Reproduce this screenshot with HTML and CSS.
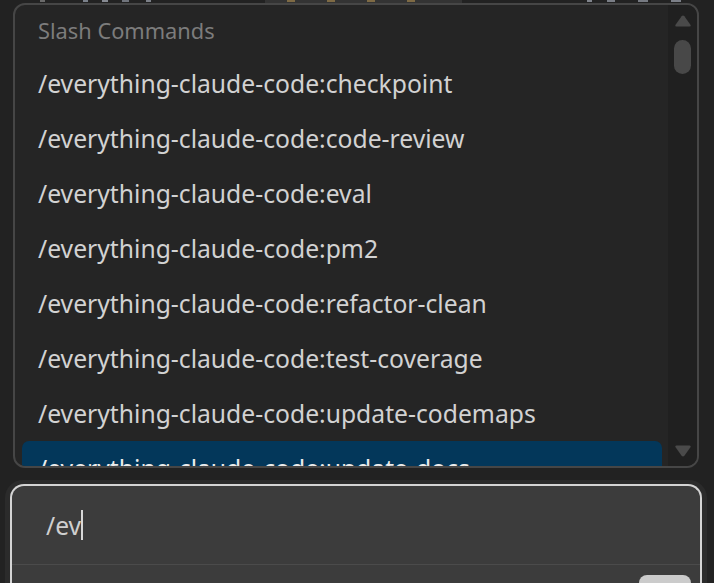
FILE: index.html
```html
<!DOCTYPE html>
<html>
<head>
<meta charset="utf-8">
<link rel="stylesheet" href="styles.css">
</head>
<body>
<div class="backdrop">
  <span class="frag frag-a"></span>
  <span class="frag frag-b"></span>
  <span class="frag frag-c"><i></i><i></i><i></i><i></i></span>
  <span class="frag frag-d"></span>
</div>
<div class="popup">
  <div class="list">
    <div class="header">Slash Commands</div>
    <div class="item">/everything-claude-code:checkpoint</div>
    <div class="item">/everything-claude-code:code-review</div>
    <div class="item">/everything-claude-code:eval</div>
    <div class="item">/everything-claude-code:pm2</div>
    <div class="item">/everything-claude-code:refactor-clean</div>
    <div class="item">/everything-claude-code:test-coverage</div>
    <div class="item">/everything-claude-code:update-codemaps</div>
    <div class="item selected">/everything-claude-code:update-docs</div>
  </div>
  <div class="scrollbar">
    <svg class="arrow" width="18" height="14" viewBox="0 0 18 14"><path d="M9 1.5 Q9.8 1.5 10.4 2.3 L16.6 11 Q17.2 12.5 15.6 12.5 L2.4 12.5 Q0.8 12.5 1.4 11 L7.6 2.3 Q8.2 1.5 9 1.5 Z" fill="#4a4a4a"/></svg>
    <div class="thumb"></div>
    <div class="spacer"></div>
    <svg class="arrow" width="18" height="14" viewBox="0 0 18 14"><path d="M9 12.5 Q9.8 12.5 10.4 11.7 L16.6 3 Q17.2 1.5 15.6 1.5 L2.4 1.5 Q0.8 1.5 1.4 3 L7.6 11.7 Q8.2 12.5 9 12.5 Z" fill="#4a4a4a"/></svg>
  </div>
</div>
<div class="composer">
  <div class="inputbox">
    <div class="input-line"><span class="typed">/ev</span><span class="caret"></span></div>
    <div class="toolbar">
      <div class="send"></div>
    </div>
  </div>
</div>
</body>
</html>
```

FILE: styles.css
```css
html, body {
  margin: 0;
  padding: 0;
}
body {
  width: 714px;
  height: 583px;
  overflow: hidden;
  background: #222222;
  font-family: "Noto Sans", "Open Sans", sans-serif;
}
.backdrop {
  height: 3px;
  display: flex;
  align-items: flex-start;
  overflow: hidden;
}
.frag {
  display: block;
  height: 2px;
}
.frag-a {
  margin-left: 40px;
  width: 6px;
  background: #6a6a6a;
}
.frag-b {
  margin-left: 38px;
  width: 100px;
  background: linear-gradient(90deg, #7a808a 0 6%, transparent 6% 22%, #868a92 22% 30%, transparent 30% 46%, #70747c 46% 54%, transparent 54% 74%, #7c8088 74% 80%, transparent 80%);
}
.frag-c {
  margin-left: 97px;
  width: 228px;
  height: 3px;
  background: #333333;
  display: flex;
  gap: 32px;
  padding-left: 22px;
  box-sizing: border-box;
}
.frag-c i {
  display: block;
  width: 8px;
  height: 2px;
  background: #7e6a44;
}
.frag-d {
  margin-left: 125px;
  width: 150px;
  background: linear-gradient(90deg, #80848c 0 4%, transparent 4% 16%, #7a7e86 16% 22%, transparent 22% 40%, #767a82 40% 48%, transparent 48% 66%, #7c8088 66% 74%, transparent 74%);
}
.popup {
  margin-left: 13px;
  width: 686px;
  height: 465px;
  box-sizing: border-box;
  border: 2px solid #464646;
  border-radius: 12px;
  background: #252525;
  display: flex;
  overflow: hidden;
}
.list {
  flex: 1;
  min-width: 0;
  padding: 0 6px 0 7px;
  overflow: hidden;
}
.header {
  height: 51px;
  padding-left: 16px;
  box-sizing: border-box;
  display: flex;
  align-items: center;
  font-size: 21.8px;
  color: #7c7c7c;
}
.item {
  height: 55px;
  display: flex;
  align-items: center;
  padding-left: 16px;
  font-size: 24.7px;
  color: #d2d2d2;
  white-space: nowrap;
  border-radius: 7px;
}
.item.selected {
  background: #03375a;
  color: #ececec;
}
.scrollbar {
  width: 29px;
  background: #202020;
  display: flex;
  flex-direction: column;
  align-items: center;
  padding-top: 9px;
  padding-bottom: 8px;
  box-sizing: border-box;
}
.arrow {
  display: block;
  flex: none;
}
.thumb {
  margin-top: 12px;
  width: 17px;
  height: 34px;
  border-radius: 9px;
  background: #484848;
}
.spacer {
  flex: 1;
}
.composer {
  margin: 12px 7px 0 5px;
  background: #2b2b2b;
  border-radius: 18px 18px 0 0;
  padding: 4px 5px 0 5px;
  height: 120px;
}
.inputbox {
  border: 2px solid #d4d4d4;
  border-bottom: none;
  border-radius: 14px 14px 0 0;
  background: #3c3c3c;
  height: 120px;
  box-sizing: border-box;
}
.input-line {
  height: 78px;
  display: flex;
  align-items: center;
  padding-left: 34px;
  border-bottom: 1px solid #4b4b4b;
}
.typed {
  font-size: 24.6px;
  color: #cfcfcf;
}
.caret {
  display: block;
  width: 2px;
  height: 30px;
  background: #d8d8d8;
  margin-left: 0;
}
.toolbar {
  display: flex;
  justify-content: flex-end;
  padding: 10px 9px 0 0;
}
.send {
  width: 52px;
  height: 30px;
  border-radius: 8px;
  background: #cbcbcb;
}
```
